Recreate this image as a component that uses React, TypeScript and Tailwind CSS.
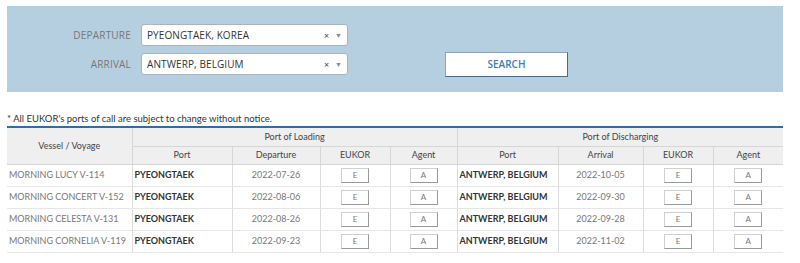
import React from "react";

const rows = [
  { vessel: "MORNING LUCY V-114", dep: "2022-07-26", arr: "2022-10-05" },
  { vessel: "MORNING CONCERT V-152", dep: "2022-08-06", arr: "2022-09-30" },
  { vessel: "MORNING CELESTA V-131", dep: "2022-08-26", arr: "2022-09-28" },
  { vessel: "MORNING CORNELIA V-119", dep: "2022-09-23", arr: "2022-11-02" },
];

const SmallBtn = ({ label }: { label: string }) => (
  <button className="inline-flex items-center justify-center w-[28px] h-[15px] bg-white border border-[#d0d0d0] border-r-[#999] border-b-[#999] text-[8px] text-[#777] leading-none align-middle">
    {label}
  </button>
);

const Select = ({ value }: { value: string }) => (
  <div className="flex items-center w-[207px] h-[22px] bg-white border border-[#aab4be] rounded-[3px] pl-[5px] pr-[5px]">
    <span className="flex-1 text-[10px] text-[#333] tracking-[0.1px]">{value}</span>
    <span className="text-[9px] text-[#444] mr-[6px] leading-none">×</span>
    <span className="text-[7px] text-[#888] leading-none">▼</span>
  </div>
);

export default function App() {
  const th = "border border-[#d6d6d6] font-normal text-[9px] text-[#444]";
  const td = "border-b border-[#e6e6e6] border-x border-x-[#dcdcdc] text-[9px] h-[22px]";
  return (
    <div className="w-[800px] h-[263px] bg-white px-[7px] pt-[6px] font-['Lato','Open_Sans',sans-serif]">
      <div className="w-[776px] h-[86px] bg-[#b5cfe1] flex items-start pt-[18px] font-['Open_Sans','Lato',sans-serif]">
        <div className="grid grid-cols-[124px_207px] gap-x-[10px] gap-y-[7px] items-center">
          <span className="text-right text-[10px] text-[#777] tracking-[0.2px]">DEPARTURE</span>
          <Select value="PYEONGTAEK, KOREA" />
          <span className="text-right text-[10px] text-[#777] tracking-[0.2px]">ARRIVAL</span>
          <Select value="ANTWERP, BELGIUM" />
        </div>
        <button className="ml-[97px] mt-[28px] w-[123px] h-[25px] bg-white border border-[#8aa2bb] border-r-[#4b6a8c] border-b-[#4b6a8c] text-[10px] font-semibold text-[#3f7bb5]">
          SEARCH
        </button>
      </div>

      <p className="mt-[20px] text-[9.5px] leading-[13px] text-[#333]">
        * All EUKOR's ports of call are subject to change without notice.
      </p>

      <table className="mt-[1px] w-[776px] border-collapse table-fixed border-t-2 border-t-[#2e6ea8]">
        <colgroup>
          <col className="w-[125px]" />
          <col className="w-[100px]" />
          <col className="w-[88px]" />
          <col className="w-[70px]" />
          <col className="w-[67px]" />
          <col className="w-[101px]" />
          <col className="w-[85px]" />
          <col className="w-[70px]" />
          <col className="w-[70px]" />
        </colgroup>
        <thead className="bg-[#efefef]">
          <tr className="h-[19px]">
            <th rowSpan={2} className={`${th} border-l-0`}>Vessel / Voyage</th>
            <th colSpan={4} className={th}>Port of Loading</th>
            <th colSpan={4} className={`${th} border-r-0`}>Port of Discharging</th>
          </tr>
          <tr className="h-[18px]">
            <th className={th}>Port</th>
            <th className={th}>Departure</th>
            <th className={th}>EUKOR</th>
            <th className={th}>Agent</th>
            <th className={th}>Port</th>
            <th className={th}>Arrival</th>
            <th className={th}>EUKOR</th>
            <th className={`${th} border-r-0`}>Agent</th>
          </tr>
        </thead>
        <tbody>
          {rows.map((r) => (
            <tr key={r.vessel}>
              <td className={`${td} border-l-0 pl-[2px] text-[#777] whitespace-nowrap`}>{r.vessel}</td>
              <td className={`${td} pl-[2px] font-bold text-[#333]`}>PYEONGTAEK</td>
              <td className={`${td} text-center text-[#777]`}>{r.dep}</td>
              <td className={`${td} text-center`}><SmallBtn label="E" /></td>
              <td className={`${td} text-center`}><SmallBtn label="A" /></td>
              <td className={`${td} pl-[2px] font-bold text-[#333]`}>ANTWERP, BELGIUM</td>
              <td className={`${td} text-center text-[#777]`}>{r.arr}</td>
              <td className={`${td} text-center`}><SmallBtn label="E" /></td>
              <td className={`${td} border-r-0 text-center`}><SmallBtn label="A" /></td>
            </tr>
          ))}
        </tbody>
      </table>
    </div>
  );
}
